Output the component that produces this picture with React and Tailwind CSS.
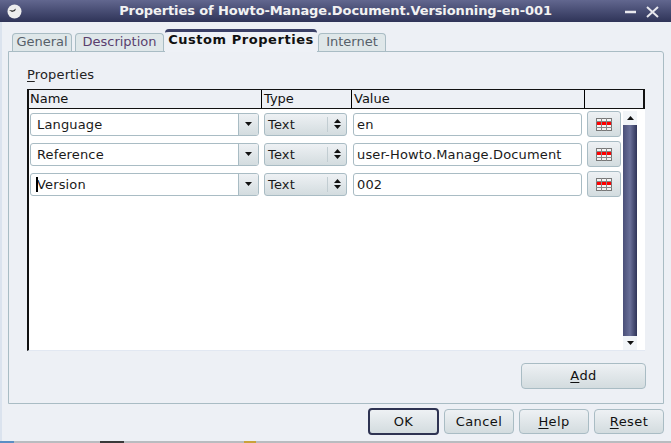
import React from 'react';

const font = { fontFamily: '"DejaVu Sans", sans-serif' };

function U({ children }) {
    return <span className="underline underline-offset-2">{children}</span>;
}

function Arrow({ up }) {
    return (
        <svg width="7" height="4" viewBox="0 0 7 4" className="block">
            <path d={up ? 'M3.5 0 L7 4 L0 4 Z' : 'M0 0 L7 0 L3.5 4 Z'} fill="#111" />
        </svg>
    );
}

function GridIcon() {
    return (
        <svg width="16" height="13" viewBox="0 0 16 13" className="block">
            <rect x="0.5" y="0.5" width="15" height="12" fill="#f4f4f4" stroke="#777" />
            <path d="M0 3.5H16M0 9.5H16M5.5 0V13M10.5 0V13" stroke="#888" strokeWidth="1" fill="none" />
            <rect x="1" y="4" width="4" height="3" fill="#ff0000" />
            <rect x="6" y="4" width="4" height="3" fill="#ff0000" />
            <rect x="11" y="4" width="4" height="3" fill="#ff0000" />
        </svg>
    );
}

function PropRow({ name, value, caret }) {
    return (
        <div className="flex items-center h-[26px] mb-[4px]">
            <div className="relative ml-[1px] w-[229px] h-[23px] flex border border-[#a9bcc4] rounded-[3px] bg-white overflow-hidden">
                <div className="flex-1 pl-[6px] text-[13px] leading-[21px] text-[#1a1a1a] tracking-[0.15px]">{name}</div>
                <div className="w-[20px] border-l border-[#a9bcc4] bg-gradient-to-b from-[#eef1f4] to-[#d3dcdf] flex items-center justify-center">
                    <Arrow />
                </div>
                {caret && <div className="absolute left-[5px] top-[3px] w-[2px] h-[15px] bg-black" />}
            </div>
            <div className="ml-[5px] w-[83px] h-[23px] flex border border-[#a9bcc4] rounded-[3px] bg-gradient-to-b from-[#eef1f4] to-[#d3dcdf]">
                <div className="flex-1 pl-[3px] text-[13px] leading-[21px] text-[#1a1a1a] tracking-[0.15px]">Text</div>
                <div className="w-[19px] flex items-center">
                    <div className="w-px h-[15px] bg-[#c2cdd2]" />
                    <div className="flex-1 flex flex-col items-center justify-center gap-[2px]">
                        <Arrow up />
                        <Arrow />
                    </div>
                </div>
            </div>
            <div className="ml-[6px] w-[229px] h-[23px] border border-[#a9bcc4] rounded-[3px] bg-white pl-[3px] text-[13px] leading-[21px] text-[#1a1a1a] tracking-[0.15px]">
                {value}
            </div>
            <div className="ml-[5px] w-[34px] h-[26px] border border-[#a9bcc4] rounded-[3px] bg-gradient-to-b from-[#eef1f4] to-[#d3dcdf] flex items-center justify-center">
                <GridIcon />
            </div>
        </div>
    );
}

function Tab({ label, width, color }) {
    return (
        <div className={`${width} ${color} h-[18px] rounded-t-[4px] border border-b-0 border-[#a9bcc4] bg-[#dfe7e9] text-center text-[13px] leading-[16px]`}>
            {label}
        </div>
    );
}

function Btn({ width, children, isDefault }) {
    return (
        <div className={`${width} flex items-center justify-center rounded-[4px] bg-gradient-to-b from-[#eef1f4] to-[#d3dcdf] text-[13px] text-[#111] tracking-[0.4px] ${isDefault ? 'h-[27px] border-2 border-[#2e3352]' : 'h-[25px] mt-[1px] border border-[#a9bcc4]'}`}>
            <span>{children}</span>
        </div>
    );
}

export default function App() {
    return (
        <div style={font} className="w-[671px] h-[443px] overflow-hidden flex flex-col bg-[#edf0f5]">
            {/* title bar */}
            <div className="relative h-[22px] shrink-0 flex items-center justify-center bg-gradient-to-b from-[#62678f] to-[#2f3458]">
                <span className="text-[13px] font-bold text-[#f2f2f2] tracking-[-0.1px]">Properties of Howto-Manage.Document.Versionning-en-001</span>
                <svg width="15" height="15" viewBox="0 0 15 15" className="absolute left-[7px] top-[4px]">
                    <circle cx="7.5" cy="7.5" r="7" fill="#eeeeee" />
                    <path d="M2 6 L6 6.5 L9 4.5 L8 7 L5 8 Z" fill="#333" />
                </svg>
                <svg width="40" height="14" viewBox="0 0 40 14" className="absolute left-[623px] top-[5px]">
                    <path d="M2 7H13" stroke="#e8e8ee" strokeWidth="2.5" />
                    <path d="M24 2L35 12M35 2L24 12" stroke="#e8e8ee" strokeWidth="2" />
                </svg>
            </div>

            <div className="flex-1 flex flex-col pl-[6px] pt-[7px] border-l-2 border-[#dbe3ee]">
                {/* tabs */}
                <div className="flex items-end pl-[4px] h-[22px]">
                    <Tab label="General" width="w-[60px]" color="text-[#56606a]" />
                    <div className="w-[3px]" />
                    <Tab label="Description" width="w-[89px]" color="text-[#5a3f6e]" />
                    <div className="w-px" />
                    <div className="w-[152px] h-[23px] -mb-px z-10 rounded-t-[4px] border-t-[3px] border-[#3a3f66] bg-[#eef1f6] text-center text-[13px] font-bold leading-[15px] text-[#111] tracking-[0.55px]">
                        Custom Properties
                    </div>
                    <div className="w-px" />
                    <Tab label="Internet" width="w-[68px]" color="text-[#56606a]" />
                </div>

                {/* tab panel */}
                <div className="w-[656px] h-[353px] border border-[#a9bcc4] rounded-tr-[3px] pl-[18px] flex flex-col">
                    <div className="h-[37px] pt-[15px] text-[13px] leading-[15px] text-[#222] tracking-[0.15px]">
                        <U>P</U>roperties
                    </div>
                    <div className="w-[618px] h-[20px] flex border-x-2 border-y border-[#111] bg-[#edf0f5] text-[13px] leading-[17px] text-[#111]">
                        <div className="w-[233px] pl-[1px] border-r border-black">Name</div>
                        <div className="w-[90px] pl-[2px] border-r border-black">Type</div>
                        <div className="w-[233px] pl-[2px] border-r border-black">Value</div>
                    </div>
                    <div className="w-[618px] h-[242px] flex border-l-2 border-[#111] border-b border-b-[#e2e8f2] bg-white">
                        <div className="w-[594px] pt-[2px]">
                            <PropRow name="Language" value="en" />
                            <PropRow name="Reference" value="user-Howto.Manage.Document" />
                            <PropRow name="Version" value="002" caret />
                        </div>
                        <div className="w-[14px] flex flex-col mt-[2px]">
                            <div className="h-[14px] bg-[#f2f5f8] flex items-center justify-center"><Arrow up /></div>
                            <div className="flex-1 bg-gradient-to-r from-[#4a4f78] via-[#6a7099] to-[#2f3458]" />
                            <div className="h-[14px] bg-[#f2f5f8] flex items-center justify-center"><Arrow /></div>
                        </div>
                    </div>
                    <div className="flex justify-end w-[619px] mt-[12px]">
                        <div className="w-[125px] h-[26px] flex items-center justify-center rounded-[4px] border border-[#a9bcc4] bg-gradient-to-b from-[#eef1f4] to-[#d3dcdf] text-[13px] text-[#111] tracking-[0.4px]">
                            <span><U>A</U>dd</span>
                        </div>
                    </div>
                </div>

                {/* dialog buttons */}
                <div className="flex justify-end gap-[5px] w-[656px] mt-[4px]">
                    <Btn width="w-[71px]" isDefault>OK</Btn>
                    <Btn width="w-[70px]">Cancel</Btn>
                    <Btn width="w-[70px]"><U>H</U>elp</Btn>
                    <Btn width="w-[70px]"><U>R</U>eset</Btn>
                </div>
            </div>

            {/* desktop showing under the window */}
            <div className="h-[2px] shrink-0 bg-[#b9bcc0] flex">
                <div className="w-[14px] bg-[#5b8ec4]" />
                <div className="w-[86px]" />
                <div className="w-[24px] bg-[#3a3a3a]" />
                <div className="w-[120px]" />
                <div className="w-[12px] bg-[#c9a23a]" />
            </div>
        </div>
    );
}
